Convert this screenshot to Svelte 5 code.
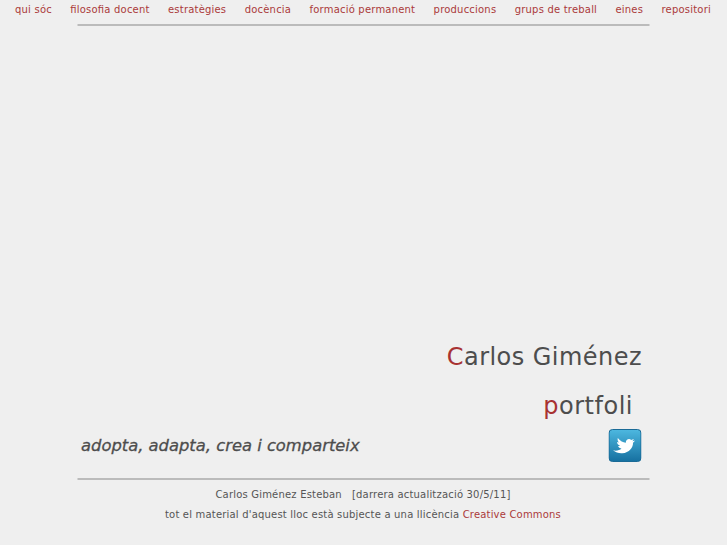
<script>
  const items = ['qui sóc','filosofia docent','estratègies','docència','formació permanent','produccions','grups de treball','eines','repositori'];
</script>

<div class="page">
  <nav class="menu">
    {#each items as item}
      <a href="#top">{item}</a>
    {/each}
  </nav>
  <main class="wrap">
    <hr />
    <section class="hero">
      <h1 class="name"><span class="red">C</span>arlos Giménez</h1>
      <h2 class="port"><span class="red">p</span>ortfoli</h2>
      <div class="row">
        <p class="motto">adopta, adapta, crea i comparteix</p>
        <a class="tw" href="#top" aria-label="Twitter">
          <svg width="33" height="33" viewBox="0 0 33 33">
            <defs>
              <linearGradient id="g" x1="0" y1="0" x2="0" y2="1">
                <stop offset="0" stop-color="#4db8e0" />
                <stop offset="1" stop-color="#1670a0" />
              </linearGradient>
            </defs>
            <rect x="0.5" y="0.5" width="32" height="32" rx="3.5" fill="url(#g)" stroke="#1a6a96" />
            <path transform="translate(-2 0.5)" fill="#fff" d="M28.500 11c-.9.500-1.800.7-2.800.7.800-.5 1.400-1.200 1.600-2.200-.8.500-1.700.8-2.600.9-2-1.900-5.400-.7-5.400 2.800-2.800-.1-5.500-1.800-8-4.700-.5 1.700 0 3.300 1.100 4.500-.7 0-1.200-.1-1.900-.4.200 1.800 1.100 3 3 3.700-.7.200-1.200.2-1.900.1.500 1.400 1.700 2.100 3.400 2.500-1.900 1.700-5 2.900-8.500 1.900 2.800 2.200 6 3.300 9.300 3 7-.6 11-6 10.700-10.600.8-.6 1.400-1.200 2-2.200z" />
          </svg>
        </a>
      </div>
    </section>
    <hr />
    <footer class="foot">
      <p>Carlos Giménez Esteban &nbsp; [darrera actualització 30/5/11]</p>
      <p>tot el material d'aquest lloc està subjecte a una llicència <a href="#top">Creative Commons</a></p>
    </footer>
  </main>
</div>

<style>
  :global(body) {
    margin: 0;
    background: #efefef;
  }
  .page {
    height: 545px;
    overflow: hidden;
    font-family: "DejaVu Sans", sans-serif;
    color: #4d4d4d;
  }
  .menu {
    display: flex;
    justify-content: center;
    gap: 18.400px;
    height: 24px;
    align-items: center;
    padding-bottom: 6px;
    padding-right: 1px;
    box-sizing: border-box;
    font-size: 10px;
    letter-spacing: 0.2px;
    font-feature-settings: "liga" 1;
    white-space: nowrap;
  }
  a {
    color: #ab3a3a;
    text-decoration: none;
  }
  .wrap {
    width: 572px;
    margin: 0 auto;
    transform: translateX(-0.5px);
  }
  hr {
    border: 0;
    height: 2px;
    background: #bbb;
    margin: 0;
  }
  .hero {
    height: 452px;
    display: flex;
    flex-direction: column;
    justify-content: flex-end;
    box-sizing: border-box;
    padding-bottom: 16px;
  }
  h1, h2, p {
    margin: 0;
    font-weight: normal;
  }
  .name {
    font-size: 24px;
    line-height: 30px;
    text-align: right;
    padding-right: 7px;
    letter-spacing: 0.46px;
  }
  .port {
    font-size: 24px;
    line-height: 30px;
    text-align: right;
    padding-right: 16px;
    margin-top: 19px;
    letter-spacing: 0.5px;
  }
  .red {
    color: #a83232;
  }
  .row {
    display: flex;
    justify-content: space-between;
    align-items: flex-end;
    padding: 0 8px 0 4px;
    margin-top: 8px;
  }
  .motto {
    font-size: 16.350px;
    font-style: italic;
    line-height: 20px;
    padding-bottom: 6px;
    -webkit-text-stroke: 0.3px #4d4d4d;
  }
  .tw {
    display: block;
    height: 33px;
  }
  .foot {
    text-align: center;
    font-size: 10px;
    letter-spacing: 0.19px;
    font-feature-settings: "liga" 1;
    padding-top: 5px;
    color: #555;
  }
  .foot p {
    line-height: 20px;
  }
</style>
